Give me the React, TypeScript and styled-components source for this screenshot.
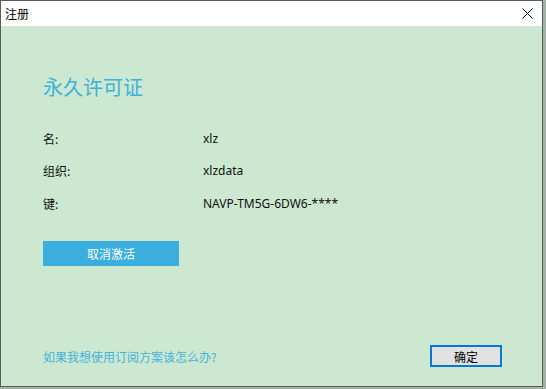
import { Fragment } from "react";
import styled, { createGlobalStyle } from "styled-components";

const GlobalStyle = createGlobalStyle`
  html, body {
    margin: 0;
    padding: 0;
    background: #a3b0a8;
  }
  body {
    font-family: "Segoe UI", "Noto Sans", "Noto Sans CJK SC", sans-serif;
  }
`;

const SWindow = styled.div`
  box-sizing: border-box;
  width: 543px;
  height: 387px;
  border: 1px solid #56605a;
  display: flex;
  flex-direction: column;
  background: #cde8d0;
`;

const STitleBar = styled.div`
  height: 25px;
  background: #ffffff;
  display: flex;
  align-items: center;
  justify-content: space-between;
  padding: 0 8px 0 4px;
  font-size: 12px;
  color: #000;
  font-family: "Noto Sans CJK SC", sans-serif;
`;

const SClose = styled.button`
  border: none;
  background: transparent;
  padding: 0;
  width: 14px;
  height: 14px;
  display: flex;
  align-items: center;
  justify-content: center;
`;

const SContent = styled.div`
  flex: 1;
  display: flex;
  flex-direction: column;
  padding: 47px 40px 19px 42px;
`;

const SHeading = styled.h1`
  margin: 0;
  font-size: 20px;
  line-height: 28px;
  font-weight: 400;
  color: #3cb1dc;
  font-family: "Noto Sans CJK SC", sans-serif;
`;

const SInfo = styled.div`
  margin-top: 21px;
  display: grid;
  grid-template-columns: 160px 1fr;
  grid-auto-rows: 32.5px;
  align-items: center;
  font-size: 12px;
  color: #111;
`;

const SLabel = styled.span`
  font-family: "Noto Sans CJK SC", sans-serif;
`;

const SValue = styled.span``;

const SPrimary = styled.button`
  margin-top: 21px;
  width: 136px;
  height: 25px;
  border: none;
  background: #3aaedc;
  color: #fff;
  font-size: 12px;
  font-family: "Noto Sans CJK SC", sans-serif;
  padding: 0;
`;

const SFooter = styled.div`
  margin-top: auto;
  display: flex;
  align-items: center;
  justify-content: space-between;
`;

const SLink = styled.a`
  font-size: 12px;
  color: #45b2d9;
  font-family: "Noto Sans CJK SC", sans-serif;
  text-decoration: none;
`;

const SOk = styled.button`
  box-sizing: border-box;
  width: 72px;
  height: 22px;
  border: 2px solid #0078d7;
  background: #e1e1e1;
  color: #000;
  font-size: 12px;
  font-family: "Noto Sans CJK SC", sans-serif;
  padding: 0;
`;

const rows = [
  { label: "名:", value: "xlz" },
  { label: "组织:", value: "xlzdata" },
  { label: "键:", value: "NAVP-TM5G-6DW6-****" },
];

function App() {
  return (
    <>
      <GlobalStyle />
      <SWindow>
        <STitleBar>
          <span>注册</span>
          <SClose>
            <svg width="11" height="11" viewBox="0 0 11 11">
              <path d="M0.5 0.5 L10.5 10.5 M10.5 0.5 L0.5 10.5" stroke="#000" strokeWidth="1" />
            </svg>
          </SClose>
        </STitleBar>
        <SContent>
          <SHeading>永久许可证</SHeading>
          <SInfo>
            {rows.map((r) => (
              <Fragment key={r.label}>
                <SLabel>{r.label}</SLabel>
                <SValue>{r.value}</SValue>
              </Fragment>
            ))}
          </SInfo>
          <SPrimary>取消激活</SPrimary>
          <SFooter>
            <SLink href="#">如果我想使用订阅方案该怎么办?</SLink>
            <SOk>确定</SOk>
          </SFooter>
        </SContent>
      </SWindow>
    </>
  );
}

export default App;
